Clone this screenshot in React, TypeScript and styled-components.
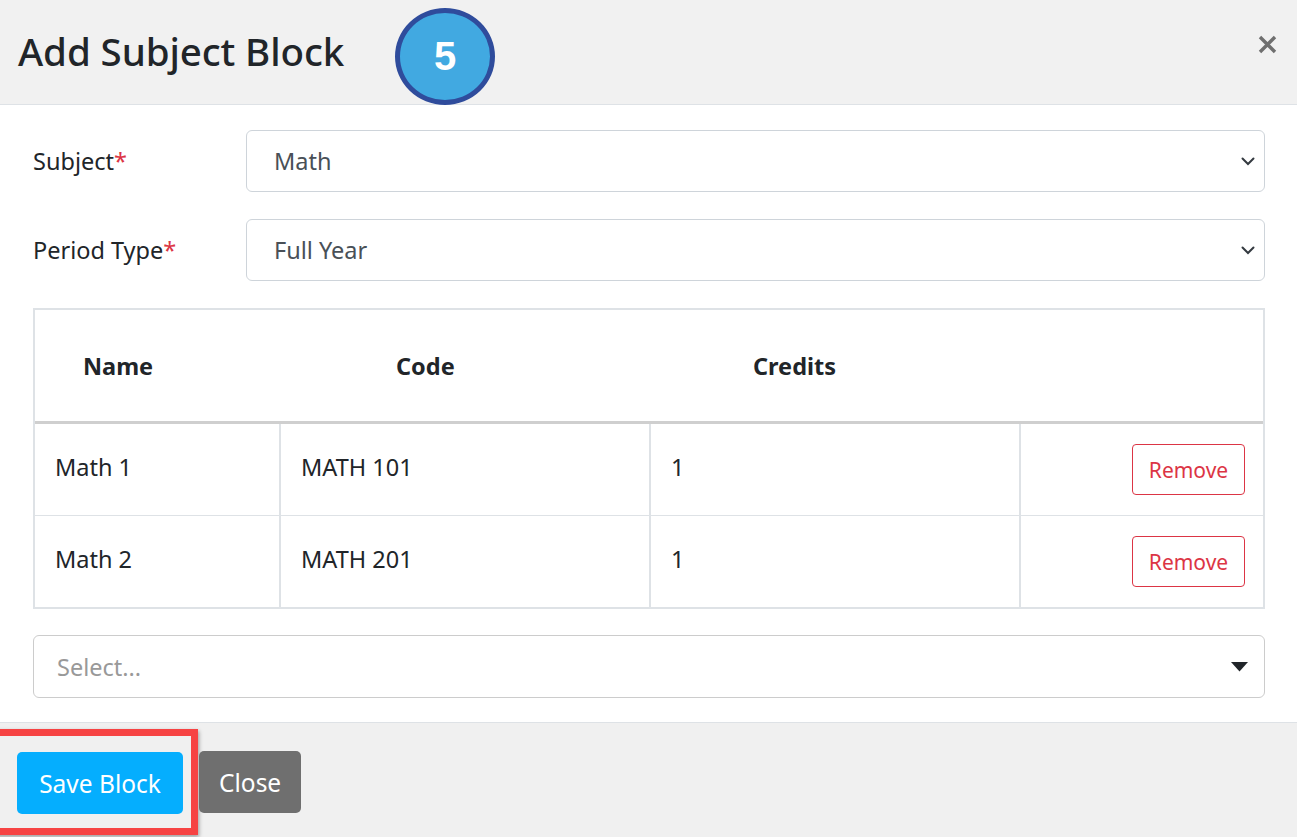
import styled, { createGlobalStyle } from 'styled-components';

const GlobalStyle = createGlobalStyle`
    html, body {
        margin: 0;
        padding: 0;
        background: #ffffff;
    }
    body {
        font-family: 'Noto Sans', 'Open Sans', sans-serif;
        color: #212529;
    }
`;

const subjects = [
    { name: 'Math 1', code: 'MATH 101', credits: 1 },
    { name: 'Math 2', code: 'MATH 201', credits: 1 }
];

const App = (): JSX.Element => {
    return (
        <>
            <GlobalStyle />
            <Modal>
                <Header>
                    <Title>Add Subject Block</Title>
                    <StepBadge>5</StepBadge>
                    <CloseX aria-label="close">
                        <svg width="19" height="19" viewBox="0 0 19 19">
                            <path d="M2 2 L17 17 M17 2 L2 17" stroke="#6f6f6f" strokeWidth="3.4" />
                        </svg>
                    </CloseX>
                </Header>
                <Body>
                    <FormRow>
                        <Label>
                            Subject<Required>*</Required>
                        </Label>
                        <SelectBox>
                            <span>Math</span>
                            <Chevron />
                        </SelectBox>
                    </FormRow>
                    <FormRow>
                        <Label>
                            Period Type<Required>*</Required>
                        </Label>
                        <SelectBox>
                            <span>Full Year</span>
                            <Chevron />
                        </SelectBox>
                    </FormRow>
                    <Table>
                        <HeadRow>
                            <HeadCell>Name</HeadCell>
                            <HeadCell>Code</HeadCell>
                            <HeadCell>Credits</HeadCell>
                        </HeadRow>
                        {subjects.map((s, i) => (
                            <BodyRow key={s.code} $last={i === subjects.length - 1}>
                                <Cell>{s.name}</Cell>
                                <Cell>{s.code}</Cell>
                                <Cell>{s.credits}</Cell>
                                <ActionCell>
                                    <RemoveButton>Remove</RemoveButton>
                                </ActionCell>
                            </BodyRow>
                        ))}
                    </Table>
                    <PickerBox>
                        <Placeholder>Select...</Placeholder>
                        <Caret />
                    </PickerBox>
                </Body>
                <Footer>
                    <Highlight>
                        <Button $variant="primary">Save Block</Button>
                    </Highlight>
                    <Button $variant="secondary">Close</Button>
                </Footer>
            </Modal>
        </>
    );
};

export default App;

const Chevron = (): JSX.Element => (
    <svg width="14" height="9" viewBox="0 0 14 9">
        <path d="M1.5 1.5 L7 7 L12.5 1.5" fill="none" stroke="#343a40" strokeWidth="2" strokeLinecap="round" />
    </svg>
);

const Caret = (): JSX.Element => (
    <svg width="17" height="10" viewBox="0 0 17 10">
        <path d="M0 0 H17 L8.5 9.5 Z" fill="#212529" />
    </svg>
);

const Modal = styled.div`
    width: 1297px;
    height: 837px;
    display: flex;
    flex-direction: column;
    background: #ffffff;
    overflow: hidden;
`;

const Header = styled.div`
    height: 105px;
    box-sizing: border-box;
    display: flex;
    align-items: center;
    padding: 0 20px 0 18px;
    background: #f1f1f1;
    border-bottom: 1px solid #dee2e6;
`;

const Title = styled.h3`
    margin: 0 0 2px 0;
    font-size: 38.5px;
    font-weight: 500;
    color: #212529;
    letter-spacing: -0.1px;
`;

const StepBadge = styled.div`
    width: 100px;
    height: 97px;
    box-sizing: border-box;
    margin: 8px 0 0 51px;
    border-radius: 50%;
    background: #41a9e1;
    border: 5px solid #2f4c9c;
    display: flex;
    align-items: center;
    justify-content: center;
    color: #ffffff;
    font-family: 'Liberation Sans', Arial, sans-serif;
    font-weight: 700;
    font-size: 40px;
`;

const CloseX = styled.div`
    margin-left: auto;
    margin-top: -16px;
    display: flex;
`;

const Body = styled.div`
    padding: 25px 32px 24px 33px;
    display: flex;
    flex-direction: column;
    border-bottom: 1px solid #dee2e6;
`;

const FormRow = styled.div`
    display: flex;
    align-items: center;
    margin-bottom: 27px;
`;

const Label = styled.div`
    width: 213px;
    font-size: 23.5px;
    color: #212529;
`;

const Required = styled.span`
    color: #dc3545;
`;

const SelectBox = styled.div`
    flex: 1;
    height: 62px;
    box-sizing: border-box;
    border: 1px solid #ced4da;
    border-radius: 6px;
    display: flex;
    align-items: center;
    justify-content: space-between;
    padding: 0 9px 0 27px;
    font-size: 23.5px;
    color: #495057;
`;

const Table = styled.div`
    border: 2px solid #dee2e6;
    display: flex;
    flex-direction: column;
    margin-bottom: 26px;
`;

const HeadRow = styled.div`
    height: 111px;
    display: grid;
    grid-template-columns: 313px 357px 1fr;
    align-items: center;
    padding-left: 48px;
    border-bottom: 3px solid #cfcfcf;
`;

const HeadCell = styled.div`
    font-weight: 700;
    font-size: 23.5px;
    color: #212529;
`;

const BodyRow = styled.div<{ $last: boolean }>`
    height: 91px;
    display: grid;
    grid-template-columns: 246px 370px 370px 1fr;
    border-bottom: ${(p) => (p.$last ? 'none' : '1px solid #dee2e6')};
`;

const Cell = styled.div`
    display: flex;
    align-items: center;
    padding: 0 20px;
    font-size: 23.5px;
    color: #212529;
    border-right: 2px solid #dee2e6;
    padding-bottom: 6px;
`;

const ActionCell = styled.div`
    display: flex;
    align-items: center;
    justify-content: flex-end;
    padding-right: 18px;
`;

const RemoveButton = styled.button`
    height: 51px;
    width: 113px;
    border: 1px solid #dc3545;
    border-radius: 4px;
    background: #ffffff;
    color: #dc3545;
    font-family: inherit;
    font-size: 21px;
`;

const PickerBox = styled.div`
    height: 63px;
    box-sizing: border-box;
    border: 1px solid #cccccc;
    border-radius: 6px;
    display: flex;
    align-items: center;
    justify-content: space-between;
    padding: 0 16px 0 23px;
`;

const Placeholder = styled.span`
    font-size: 23.5px;
    color: #999999;
`;

const Footer = styled.div`
    flex: 1;
    background: #f0f0f0;
    display: flex;
    align-items: flex-start;
    padding-top: 6px;
`;

const Highlight = styled.div`
    padding: 16px 8px 14px 9px;
    border: 7px solid #f64343;
    border-left-width: 8px;
    margin-left: -8px;
    padding-left: 17px;
    box-shadow: 1px 2px 4px rgba(0, 0, 0, 0.35);
`;

const Button = styled.button<{ $variant: 'primary' | 'secondary' }>`
    height: 62px;
    border: none;
    border-radius: 5px;
    padding: 0 20px;
    font-family: inherit;
    font-size: 24.5px;
    color: #ffffff;
    background: ${(p) => (p.$variant === 'primary' ? '#05aefe' : '#6f6f6f')};
    ${(p) => (p.$variant === 'primary' ? 'width: 166px;' : 'margin: 22px 0 0 1px;')}
`;
